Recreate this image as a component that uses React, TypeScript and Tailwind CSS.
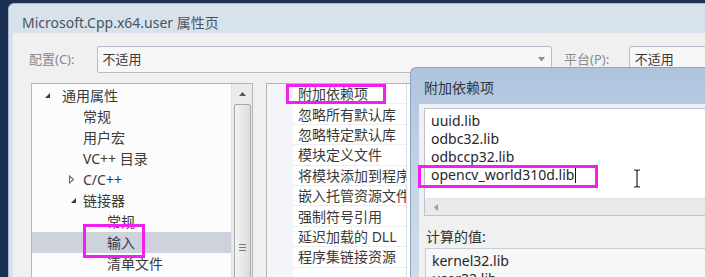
import React from "react";

type TreeItem = { label: string; pad: number; tri?: "down" | "right"; triPad?: number; selected?: boolean };

const tree: TreeItem[] = [
  { label: "通用属性", pad: 30, tri: "down", triPad: 12 },
  { label: "常规", pad: 51 },
  { label: "用户宏", pad: 51 },
  { label: "VC++ 目录", pad: 51 },
  { label: "C/C++", pad: 51, tri: "right", triPad: 36 },
  { label: "链接器", pad: 51, tri: "down", triPad: 38 },
  { label: "常规", pad: 75 },
  { label: "输入", pad: 75, selected: true },
  { label: "清单文件", pad: 75 },
];

const props = [
  "附加依赖项",
  "忽略所有默认库",
  "忽略特定默认库",
  "模块定义文件",
  "将模块添加到程序集",
  "嵌入托管资源文件",
  "强制符号引用",
  "延迟加载的 DLL",
  "程序集链接资源",
];

function Tri({ kind }: { kind: "down" | "right" }) {
  if (kind === "down") {
    return (
      <svg width="7" height="7" viewBox="0 0 7 7">
        <path d="M6 1 L6 6 L1 6 Z" fill="#3a3a3a" />
      </svg>
    );
  }
  return (
    <svg width="7" height="9" viewBox="0 0 7 9">
      <path d="M1.5 1 L5.5 4.5 L1.5 8 Z" fill="none" stroke="#6a6a6a" strokeWidth="1.1" />
    </svg>
  );
}

export default function App() {
  return (
    <div className="relative w-[705px] h-[277px] overflow-hidden bg-[#1c3152] pt-[3px] pl-[8px] font-['Noto_Sans','Noto_Sans_CJK_SC',sans-serif] text-[#333]">
      {/* main window */}
      <div className="w-[740px] h-[320px] rounded-tl-[6px] bg-[#d8e2ed] border-l border-t border-[#a9b8ca] flex flex-col">
        <div className="h-[29px] pl-[13px] pt-[9px] text-[14px] leading-[20px] text-[#4a5360]">
          Microsoft.Cpp.x64.user 属性页
        </div>
        <div className="ml-[4px] flex-1 bg-[#f0f0f0] pt-[13px] flex flex-col">
          {/* config row */}
          <div className="flex items-center h-[27px] pl-[16px]">
            <div className="w-[68px] text-[13px] text-[#8a8a8a]">配置(C):</div>
            <div className="w-[458px] h-[27px] border border-[#b9bcc2] rounded-[2px] bg-[#f7f7f7] flex items-center pl-[5px] pr-[6px] text-[13px] text-[#3a3a3a]">
              <span className="flex-1">不适用</span>
              <svg width="7" height="5" viewBox="0 0 7 5">
                <path d="M0 0 L7 0 L3.5 4.5 Z" fill="#8d8d8d" />
              </svg>
            </div>
            <div className="ml-[12px] w-[65px] text-[13px] text-[#8a8a8a]">平台(P):</div>
            <div className="w-[120px] h-[27px] border border-[#b9bcc2] rounded-[2px] bg-[#f7f7f7] flex items-center pl-[5px] text-[13px] text-[#3a3a3a]">
              不适用
            </div>
          </div>

          {/* panels */}
          <div className="flex mt-[10px] pl-[18px] flex-1">
            {/* tree */}
            <div className="relative w-[222px] h-[220px] border border-[#b0b5bd] bg-[#fcfcfc] flex">
              <div className="flex-1 pt-[1px] text-[14px] text-[#3a3a3a]">
                {tree.map((t, i) => (
                  <div
                    key={i}
                    className={`h-[21px] flex items-center ${t.selected ? "bg-[#ced2dc]" : ""}`}
                    style={{ paddingLeft: t.tri ? t.triPad : t.pad }}
                  >
                    {t.tri && (
                      <div className="flex items-center" style={{ width: t.pad - (t.triPad ?? 0) }}>
                        <Tri kind={t.tri} />
                      </div>
                    )}
                    <span className="leading-[21px] whitespace-nowrap">{t.label}</span>
                  </div>
                ))}
              </div>
              {/* scrollbar */}
              <div className="w-[21px] bg-[#ebebeb] border-l border-[#e0e0e0] flex flex-col items-center">
                <div className="h-[20px] flex items-center justify-center">
                  <svg width="7" height="4" viewBox="0 0 7 4">
                    <path d="M0 4 L7 4 L3.5 0 Z" fill="#555" />
                  </svg>
                </div>
                <div className="w-[17px] flex-1 rounded-[2px] border border-[#a8a8a8] bg-gradient-to-r from-[#f4f4f4] to-[#dcdcdc] flex flex-col items-center pt-[139px]">
                  <div className="flex flex-col gap-[2px]">
                    <div className="w-[7px] h-[1px] bg-[#777]" />
                    <div className="w-[7px] h-[1px] bg-[#777]" />
                    <div className="w-[7px] h-[1px] bg-[#777]" />
                  </div>
                </div>
              </div>
              {/* annotation */}
              <div className="absolute left-[51px] top-[140px] w-[62px] h-[34px] border-[3px] border-[#f21ff0]" />
            </div>

            {/* property grid */}
            <div className="relative ml-[13px] w-[400px] h-[220px] border border-[#b0b5bd] bg-white flex">
              <div className="w-[26px] bg-[#f3f5f9]" />
              <div className="w-[114px] border-r border-[#d8dce3] text-[14px] text-[#3a3a3a]">
                {props.map((p, i) => (
                  <div key={i} className="h-[20.4px] flex items-center pl-[5px] border-b border-[#eceef2] overflow-hidden whitespace-nowrap">
                    {p}
                  </div>
                ))}
              </div>
              <div className="flex-1" />
              <div className="absolute left-[19px] top-[0px] w-[100px] h-[20px] border-[3px] border-[#f21ff0]" />
            </div>
          </div>
        </div>
      </div>

      {/* dialog */}
      <div className="absolute left-[410px] top-[67px] w-[320px] h-[240px] rounded-tl-[6px] border-l border-t border-[#8fa5c0] bg-gradient-to-b from-[#aec4de] via-[#c6d5e7] to-[#d2dde9] flex flex-col">
        <div className="h-[36px] pl-[13px] pt-[10px] text-[14px] leading-[20px] text-[#2f3640]">附加依赖项</div>
        <div className="ml-[8px] flex-1 bg-[#f0f0f0] pt-[4px] pl-[5px] flex flex-col">
          <div className="relative w-[300px] h-[108px] border border-[#bcc3cd] bg-white flex flex-col">
            <div className="flex-1 pt-[3px] pl-[6px] text-[14px] leading-[18px] text-[#262626]">
              <div>uuid.lib</div>
              <div>odbc32.lib</div>
              <div>odbccp32.lib</div>
              <div className="flex items-center">
                <span>opencv_world310d.lib</span>
                <span className="ml-[1px] w-[1px] h-[16px] bg-[#111]" />
              </div>
            </div>
            <div className="h-[17px] bg-[#e9e9e9] border-t border-[#e2e2e2] flex items-center pl-[9px]">
              <svg width="4" height="7" viewBox="0 0 4 7">
                <path d="M4 0 L4 7 L0 3.5 Z" fill="#9a9a9a" />
              </svg>
            </div>
            <div className="absolute left-[-7px] top-[56px] w-[180px] h-[23px] border-[3px] border-[#f21ff0]" />
            <svg className="absolute left-[207px] top-[60px]" width="10" height="19" viewBox="0 0 10 19">
              <path d="M2 1 L4 1 L5 2 L6 1 L8 1 M5 2 L5 17 M2 18 L4 18 L5 17 L6 18 L8 18" fill="none" stroke="#222" strokeWidth="1.2" />
            </svg>
          </div>
          <div className="mt-[11px] h-[20px] pl-[2px] text-[14px] leading-[20px] text-[#2f2f2f]">计算的值:</div>
          <div className="mt-[1px] ml-[1px] w-[300px] flex-1 border border-[#c8cdd4] bg-[#f7f7f7] pt-[3px] pl-[6px] text-[14px] leading-[18px] text-[#262626]">
            <div>kernel32.lib</div>
            <div>user32.lib</div>
          </div>
        </div>
      </div>
    </div>
  );
}
